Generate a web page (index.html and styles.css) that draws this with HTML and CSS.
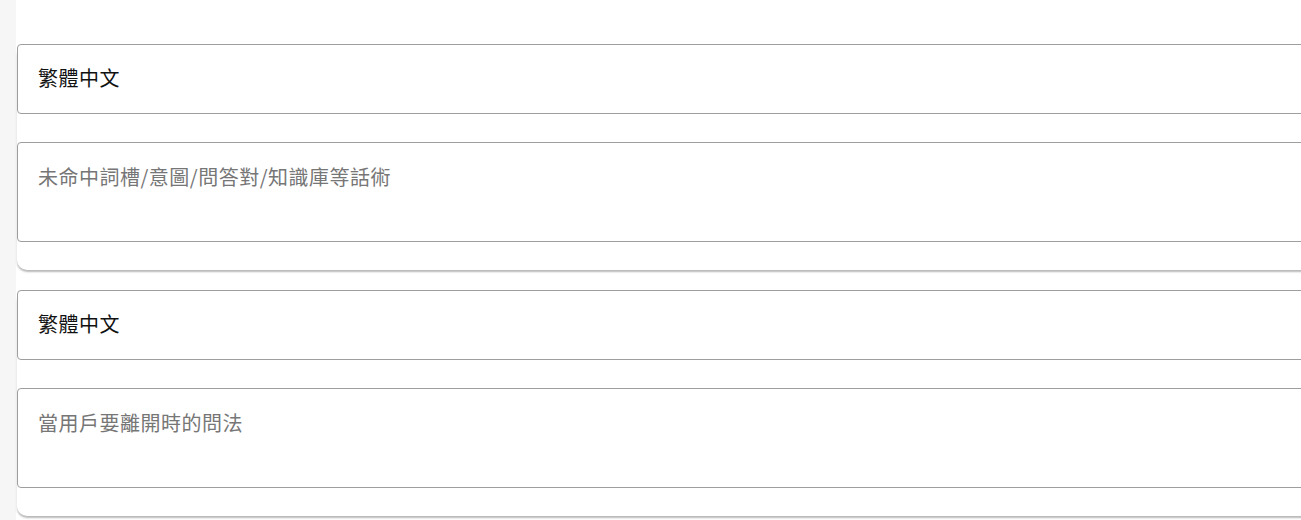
FILE: index.html
```html
<!DOCTYPE html>
<html lang="zh-Hant">
<head>
    <meta charset="UTF-8">
    <meta name="viewport" content="width=device-width, initial-scale=1.0">
    <title>話術設定</title>
    <link rel="stylesheet" href="styles.css">
</head>
<body>
    <div class="page">
        <div class="side"></div>
        <div class="main">
            <div class="card">
                <input class="field" type="text" value="繁體中文">
                <textarea class="field area" placeholder="未命中詞槽/意圖/問答對/知識庫等話術"></textarea>
            </div>
            <div class="card">
                <input class="field" type="text" value="繁體中文">
                <textarea class="field area" placeholder="當用戶要離開時的問法"></textarea>
            </div>
        </div>
    </div>
</body>
</html>
```

FILE: styles.css
```css
body {
    margin: 0;
    overflow: hidden;
    background-color: #fff;
    font-family: "Noto Sans CJK TC", "Noto Sans", sans-serif;
}
.page {
    display: flex;
    min-height: 520px;
}
.side {
    width: 16px;
    flex-shrink: 0;
    background-color: #f6f6f6;
}
.main {
    width: 1400px;
    flex-shrink: 0;
    padding: 44px 0 0 1px;
    display: flex;
    flex-direction: column;
    gap: 20px;
}
.card {
    display: flex;
    flex-direction: column;
    gap: 28px;
    padding-bottom: 28px;
    background-color: #fff;
    border-radius: 10px;
    box-shadow: 0 2px 2px rgba(0, 0, 0, 0.28);
}
.field {
    display: block;
    width: 100%;
    height: 70px;
    box-sizing: border-box;
    margin: 0;
    padding: 0 20px 3px;
    border: 1px solid #9e9e9e;
    border-radius: 4px;
    font-family: inherit;
    font-size: 20px;
    line-height: 28px;
    letter-spacing: 0.5px;
    color: #111;
    background-color: #fff;
    outline: none;
}
.area {
    height: 100px;
    padding-top: 20px;
    resize: none;
}
.field::placeholder {
    color: #767676;
}
```
